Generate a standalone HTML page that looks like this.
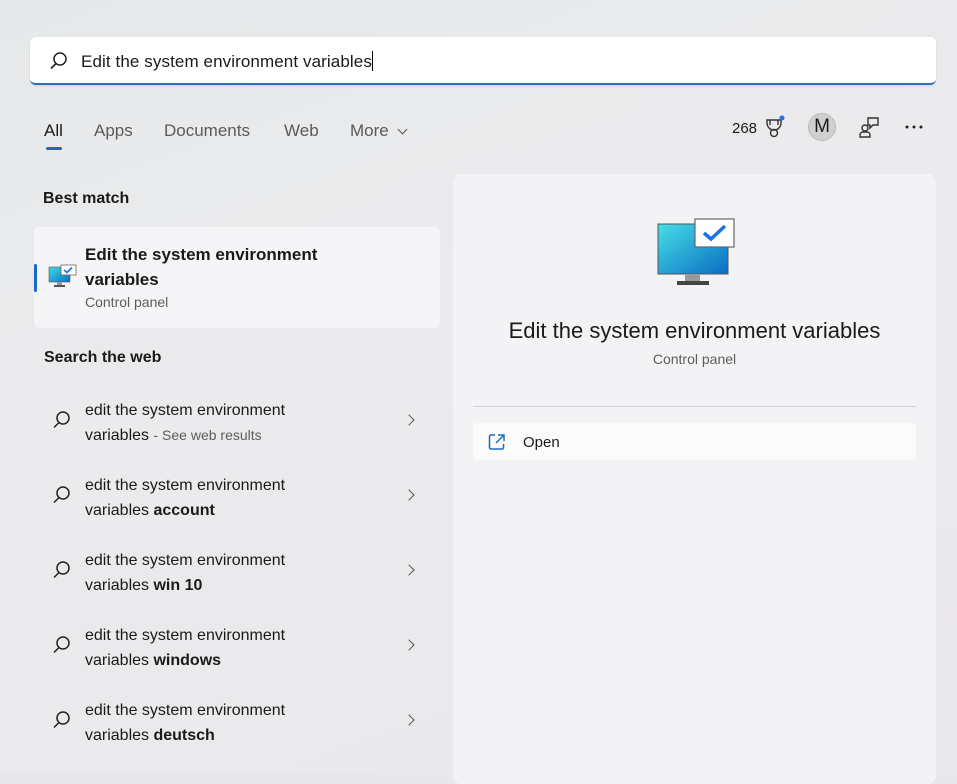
<!DOCTYPE html>
<html><head><style>
*{margin:0;padding:0;box-sizing:border-box}
body{width:957px;height:772px;overflow:hidden;background:#e8e8eb;font-family:"Segoe UI","Liberation Sans",sans-serif;color:#1a1a1a;position:relative}
.a{position:absolute;white-space:nowrap}
.search{left:30px;top:37px;width:906px;height:48px;background:#fff;border-radius:6px;border-bottom:2px solid #2a6ebd;box-shadow:0 1px 2px rgba(0,0,0,.1)}
.tab{top:121px;font-size:17px;color:#5a5a5a}
.rp{left:453px;top:174px;width:483px;height:610px;background:#f3f3f5;border-radius:8px}
.h{font-size:16px;font-weight:bold;color:#1a1a1a}
.wi{left:85px;font-size:16px;line-height:25px;color:#1a1a1a}
.chev{left:405px;width:8px;height:8px;border-right:1.5px solid #555;border-top:1.5px solid #555;transform:rotate(45deg)}
</style></head><body>
<div class="a" style="left:0;top:0;width:957px;height:772px;background:linear-gradient(160deg,#e6e9ea 0%,#ebeaec 40%,#e9e8ec 100%)"></div>
<div class="a search"></div>
<svg class="a" style="left:49px;top:51px" width="20" height="20" viewBox="0 0 20 20"><circle cx="11" cy="8" r="6" fill="none" stroke="#222" stroke-width="1.5"/><line x1="7" y1="12.5" x2="2" y2="17.5" stroke="#222" stroke-width="1.6"/></svg>
<div class="a" style="left:81px;top:51px;font-size:17px;color:#1a1a1a;letter-spacing:0.1px">Edit the system environment variables<span style="display:inline-block;width:1px;height:20px;background:#000;vertical-align:-4px"></span></div>
<div class="a tab" style="left:44px;color:#1a1a1a">All</div>
<div class="a" style="left:46px;top:147px;width:16px;height:3px;background:#1a6ac4;border-radius:2px"></div>
<div class="a tab" style="left:94px">Apps</div>
<div class="a tab" style="left:164px">Documents</div>
<div class="a tab" style="left:284px">Web</div>
<div class="a tab" style="left:350px">More</div>
<div class="a" style="left:399px;top:126px;width:7px;height:7px;border-right:1.3px solid #555;border-bottom:1.3px solid #555;transform:rotate(45deg)"></div>
<div class="a" style="left:732px;top:120px;font-size:15px">268</div>
<svg class="a" style="left:764px;top:115px" width="22" height="24" viewBox="0 0 22 24"><path d="M3 5h14v3a7 7 0 0 1-14 0z M6 5v5 M14 5v5" fill="none" stroke="#333" stroke-width="1.4"/><circle cx="10" cy="18" r="3.5" fill="none" stroke="#333" stroke-width="1.4"/><circle cx="18" cy="3" r="2.5" fill="#1a73e8"/></svg>
<div class="a" style="left:808px;top:113px;width:28px;height:28px;border-radius:50%;background:#d0d0d2;border:1px solid #bbb;font-size:19px;text-align:center;line-height:26px">M</div>
<svg class="a" style="left:858px;top:115px" width="24" height="24" viewBox="0 0 24 24"><circle cx="7" cy="13" r="3" fill="none" stroke="#333" stroke-width="1.4"/><path d="M2 22v-2a3 3 0 0 1 3-3h4a3 3 0 0 1 3 3v2z M10 3h10v7h-5l-3 3v-3h-2z" fill="none" stroke="#333" stroke-width="1.4"/></svg>
<svg class="a" style="left:904px;top:124px" width="20" height="6" viewBox="0 0 20 6"><circle cx="3" cy="3" r="1.5" fill="#222"/><circle cx="10" cy="3" r="1.5" fill="#222"/><circle cx="17" cy="3" r="1.5" fill="#222"/></svg>

<div class="a h" style="left:43px;top:190px">Best match</div>
<div class="a" style="left:34px;top:227px;width:406px;height:101px;background:#f5f5f7;border-radius:5px"></div>
<div class="a" style="left:34px;top:264px;width:3px;height:28px;background:#1a6ac4;border-radius:2px"></div>
<svg class="a" style="left:48px;top:264px" width="30" height="28" viewBox="0 0 30 28"><defs><linearGradient id="g1" x1="0" y1="0" x2="1" y2="1"><stop offset="0" stop-color="#3ddbe4"/><stop offset="1" stop-color="#0c6fc6"/></linearGradient></defs><rect x="1" y="3" width="21" height="15" fill="url(#g1)" stroke="#555" stroke-width=".6"/><rect x="9" y="18" width="5" height="3" fill="#999"/><rect x="6" y="21" width="11" height="2" fill="#555"/><rect x="13" y="1" width="15" height="10" fill="#fff" stroke="#666" stroke-width=".8"/><path d="M16 6l3 2.5 5-5" fill="none" stroke="#1a73e8" stroke-width="1.6"/></svg>
<div class="a" style="left:85px;top:242px;font-size:17px;line-height:25px;font-weight:600">Edit the system environment<br>variables</div>
<div class="a" style="left:85px;top:294px;font-size:14px;color:#5d5d5d">Control panel</div>

<div class="a h" style="left:44px;top:349px">Search the web</div>

<div class="a wi" style="top:398px">edit the system environment<br>variables <span style="font-size:14px;color:#5d5d5d">- See web results</span></div>
<div class="a wi" style="top:473px">edit the system environment<br>variables <b>account</b></div>
<div class="a wi" style="top:548px">edit the system environment<br>variables <b>win 10</b></div>
<div class="a wi" style="top:623px">edit the system environment<br>variables <b>windows</b></div>
<div class="a wi" style="top:698px">edit the system environment<br>variables <b>deutsch</b></div>
<svg class="a" style="left:52px;top:410px" width="20" height="320" viewBox="0 0 20 320">
<g fill="none" stroke="#222" stroke-width="1.5">
<circle cx="11" cy="8" r="6"/><line x1="7" y1="12.5" x2="2" y2="17.5"/>
<circle cx="11" cy="83" r="6"/><line x1="7" y1="87.5" x2="2" y2="92.5"/>
<circle cx="11" cy="158" r="6"/><line x1="7" y1="162.5" x2="2" y2="167.5"/>
<circle cx="11" cy="233" r="6"/><line x1="7" y1="237.5" x2="2" y2="242.5"/>
<circle cx="11" cy="308" r="6"/><line x1="7" y1="312.5" x2="2" y2="317.5"/></g></svg>
<div class="a chev" style="top:416px"></div>
<div class="a chev" style="top:491px"></div>
<div class="a chev" style="top:566px"></div>
<div class="a chev" style="top:641px"></div>
<div class="a chev" style="top:716px"></div>

<div class="a rp"></div>
<svg class="a" style="left:656px;top:217px" width="80" height="70" viewBox="0 0 80 70"><defs><linearGradient id="g2" x1="0" y1="0" x2="1" y2="1"><stop offset="0" stop-color="#45dfe6"/><stop offset="1" stop-color="#0a6cc4"/></linearGradient></defs><rect x="2" y="7" width="70" height="50" fill="url(#g2)" stroke="#555" stroke-width="1"/><rect x="29" y="57" width="15" height="8" fill="#9a9a9a"/><rect x="21" y="64" width="32" height="4" fill="#444"/><rect x="39" y="2" width="39" height="28" fill="#fff" stroke="#666" stroke-width="1.2"/><path d="M48 16l7 6 14-13" fill="none" stroke="#1a73e8" stroke-width="3.5"/></svg>
<div class="a" style="left:453px;width:483px;text-align:center;top:318px;font-size:22px;color:#1a1a1a">Edit the system environment variables</div>
<div class="a" style="left:453px;width:483px;text-align:center;top:351px;font-size:14px;color:#5d5d5d">Control panel</div>
<div class="a" style="left:473px;top:406px;width:443px;height:1px;background:#d4d4d6"></div>
<div class="a" style="left:473px;top:423px;width:443px;height:37px;background:#fbfbfc;border-radius:4px"></div>
<svg class="a" style="left:488px;top:433px" width="18" height="18" viewBox="0 0 18 18"><path d="M7 2H3a1.5 1.5 0 0 0-1.5 1.5v11A1.5 1.5 0 0 0 3 16h11a1.5 1.5 0 0 0 1.5-1.5V11 M10 2h6v6 M16 2L8 10" fill="none" stroke="#1a6ac4" stroke-width="1.5"/></svg>
<div class="a" style="left:523px;top:434px;font-size:15px">Open</div>
</body></html>
